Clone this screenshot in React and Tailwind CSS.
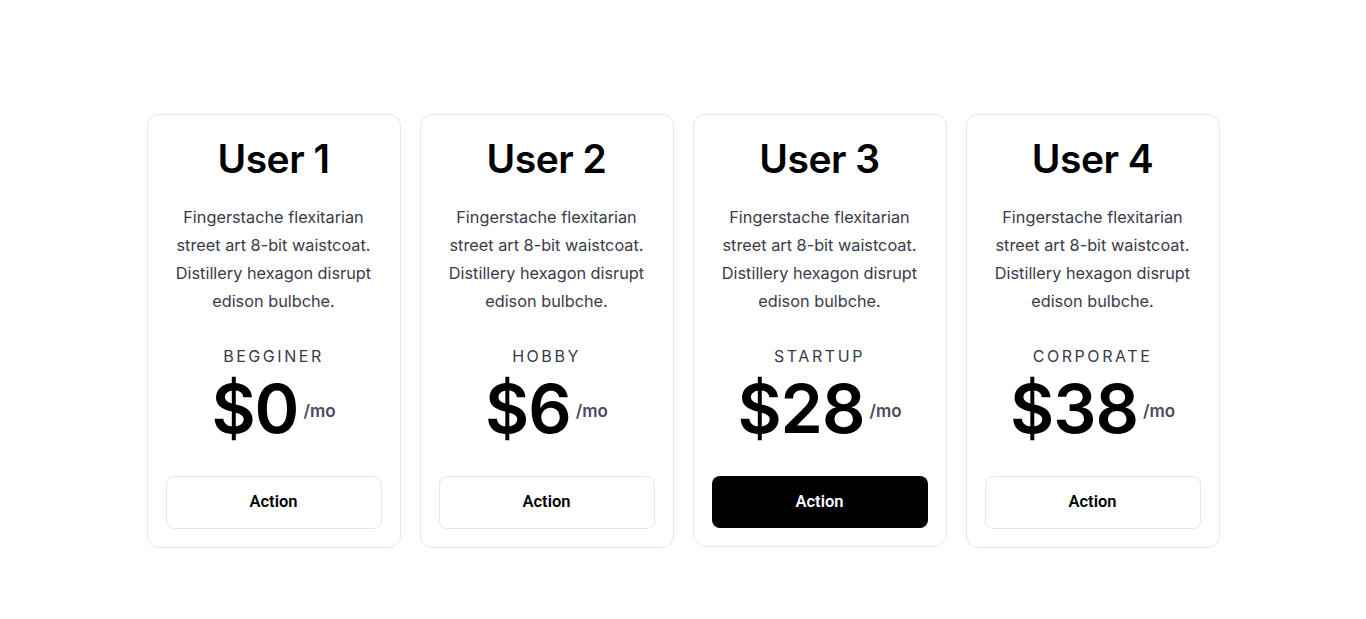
import React from "react";

const plans = [
  { user: "User 1", tier: "BEGGINER", price: "$0" },
  { user: "User 2", tier: "HOBBY", price: "$6" },
  { user: "User 3", tier: "STARTUP", price: "$28", featured: true },
  { user: "User 4", tier: "CORPORATE", price: "$38" },
];

const PlanCard = ({ user, tier, price, featured }) => {
  return (
    <div className="w-[254px] border border-[#e5e7eb] rounded-xl px-[18px] pt-6 pb-[18px] flex flex-col items-center text-center bg-white">
      <h2 className="text-[39px] leading-10 font-semibold text-black tracking-[-0.5px]">
        {user}
      </h2>
      <p className="mt-6 text-[16.3px] leading-7 text-[#3b3a4a]">
        Fingerstache flexitarian street art 8-bit waistcoat. Distillery hexagon
        disrupt edison bulbche.
      </p>
      <p className="mt-[29px] text-[16px] leading-6 tracking-[0.16em] text-[#3b3a4a]">
        {tier}
      </p>
      <div className="mt-1 h-[72px] flex items-center">
        <span className="text-[68px] leading-none font-semibold text-black tracking-[-1px]">
          {price}
        </span>
        <span className="ml-[5px] mt-2 text-[17px] font-semibold text-[#4b4a5a]">
          /mo
        </span>
      </div>
      {featured ? (
        <button className="mt-8 w-full h-[52px] rounded-lg bg-black text-white text-[16.5px] font-semibold font-['Roboto',sans-serif]">
          Action
        </button>
      ) : (
        <button className="mt-8 w-full h-[53px] rounded-lg border border-[#e5e7eb] bg-white text-black text-[16.5px] font-semibold font-['Roboto',sans-serif]">
          Action
        </button>
      )}
    </div>
  );
};

export default function App() {
  return (
    <div className="min-h-[619px] bg-white font-['Inter',sans-serif] pt-[114px]">
      <div className="flex justify-center items-start gap-[19px]">
        {plans.map((p) => (
          <PlanCard key={p.user} {...p} />
        ))}
      </div>
    </div>
  );
}
